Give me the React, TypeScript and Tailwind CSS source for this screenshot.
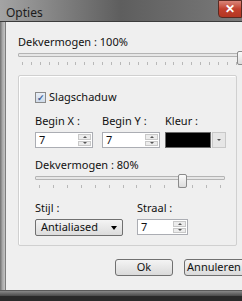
import React from "react"

function Ticks({ count }: { count: number }) {
  return (
    <div className="flex justify-between px-[4px] mt-[5px]">
      {Array.from({ length: count }).map((_, i) => (
        <div key={i} className="w-px h-[3px] bg-[#b8b8b8]" />
      ))}
    </div>
  )
}

function Slider({ pos, ticks }: { pos: number; ticks: number }) {
  return (
    <div className="relative">
      <div className="h-[4px] mt-[4px] border border-[#b4b4b4] bg-[#e6e6e6] rounded-[1px]" />
      <div
        className="absolute top-[-2px] w-[9px] h-[14px] border border-[#8a8a8a] bg-gradient-to-b from-[#fbfbfb] to-[#dcdcdc] rounded-[2px]"
        style={{ left: pos }}
      />
      <Ticks count={ticks} />
    </div>
  )
}

function Spin({ w }: { w: string }) {
  return (
    <div className={`flex h-[16px] border border-[#abadb3] bg-white ${w}`}>
      <div className="flex-1 pl-[3px] leading-[14px]">7</div>
      <div className="flex flex-col w-[13px] m-[1px] gap-px">
        <div className="flex-1 flex items-center justify-center border border-[#c8c8c8] bg-[#ececec]">
          <div className="w-0 h-0 border-x-[2px] border-x-transparent border-b-[2px] border-b-[#555]" />
        </div>
        <div className="flex-1 flex items-center justify-center border border-[#c8c8c8] bg-[#ececec]">
          <div className="w-0 h-0 border-x-[2px] border-x-transparent border-t-[2px] border-t-[#555]" />
        </div>
      </div>
    </div>
  )
}

export default function App() {
  return (
    <div
      className="w-[242px] h-[301px] overflow-hidden bg-[#2a2a2a] flex flex-col text-[11px] text-[#111]"
      style={{ fontFamily: '"Noto Sans", "Open Sans", sans-serif' }}
    >
      {/* title bar */}
      <div className="h-[22px] flex items-start justify-between bg-gradient-to-r from-[#a4a4a4] via-[#5e5e5e] to-[#7a7a7a] border-b border-[#3c3c3c]">
        <span className="pl-[6px] pt-[4px] text-[12px] text-[#1c1c1c]">Opties</span>
        <div className="w-[24px] h-[18px] flex items-center justify-center bg-gradient-to-b from-[#d98478] via-[#c2402e] to-[#b33622] border border-[#5a2a22] rounded-bl-[4px] text-white text-[12px] font-bold">
          ✕
        </div>
      </div>

      <div className="flex h-[268px]">
        <div className="w-[6px] shrink-0 bg-gradient-to-r from-[#6f6f6f] via-[#a8a8a8] to-[#c4c4c4] border-r border-[#7c7c7c]" />
        <div className="flex-1 min-w-0 bg-[#efefef] pl-[12px] pt-[13px]">
          <div className="leading-[14px]">Dekvermogen : 100%</div>
          <div className="w-[232px]">
            <Slider pos={219} ticks={26} />
          </div>

          {/* group box */}
          <div className="mt-[10px] w-[219px] h-[171px] border border-[#d0d0d0] rounded-[2px] shadow-[inset_1px_1px_0_#fff] pl-[16px] pt-[14px]">
            <div className="flex items-center gap-[3px]">
              <div className="w-[11px] h-[11px] border border-[#8a8a8a] bg-gradient-to-b from-[#e8eef6] to-[#cfdbea] flex items-center justify-center text-[#3a5f9a] text-[9px] font-bold leading-none">
                ✓
              </div>
              <span className="leading-[14px]">Slagschaduw</span>
            </div>

            <div className="flex gap-[9px] mt-[10px]">
              <div>
                <div className="leading-[14px] mb-[4px]">Begin X :</div>
                <Spin w="w-[58px]" />
              </div>
              <div>
                <div className="leading-[14px] mb-[4px]">Begin Y :</div>
                <Spin w="w-[58px]" />
              </div>
              <div className="ml-[-4px]">
                <div className="leading-[14px] mb-[4px]">Kleur :</div>
                <div className="flex h-[16px] items-stretch">
                  <div className="w-[46px] border border-[#6a6a6a] bg-black" />
                  <div className="w-[14px] ml-px border border-[#c8c8c8] bg-[#e6e6e6] flex items-center justify-center">
                    <div className="w-0 h-0 border-x-[2px] border-x-transparent border-t-[2px] border-t-[#555]" />
                  </div>
                </div>
              </div>
            </div>

            <div className="leading-[14px] mt-[10px]">Dekvermogen : 80%</div>
            <div className="w-[190px]">
              <Slider pos={143} ticks={14} />
            </div>

            <div className="flex gap-[14px] mt-[13px]">
              <div>
                <div className="leading-[14px] mb-[4px]">Stijl :</div>
                <div className="w-[88px] h-[17px] flex items-center justify-between px-[5px] border border-[#707070] rounded-[2px] bg-gradient-to-b from-[#f4f4f4] to-[#dcdcdc]">
                  <span>Antialiased</span>
                  <div className="w-0 h-0 border-x-[3.5px] border-x-transparent border-t-[4px] border-t-black" />
                </div>
              </div>
              <div>
                <div className="leading-[14px] mb-[4px]">Straal :</div>
                <Spin w="w-[51px]" />
              </div>
            </div>
          </div>

          <div className="flex gap-[11px] mt-[13px] pl-[97px]">
            <div className="w-[58px] shrink-0 h-[17px] flex items-center justify-center border border-[#707070] rounded-[3px] bg-gradient-to-b from-[#f4f4f4] to-[#dadada]">
              Ok
            </div>
            <div className="w-[64px] shrink-0 h-[17px] flex items-center justify-center pr-[4px] border border-[#707070] rounded-[3px] bg-gradient-to-b from-[#f4f4f4] to-[#dadada]">
              Annuleren
            </div>
          </div>
        </div>
      </div>

      <div className="h-[6px] bg-gradient-to-b from-[#8a8a8a] to-[#4a4a4a] border-t border-[#5a5a5a]" />
    </div>
  )
}
